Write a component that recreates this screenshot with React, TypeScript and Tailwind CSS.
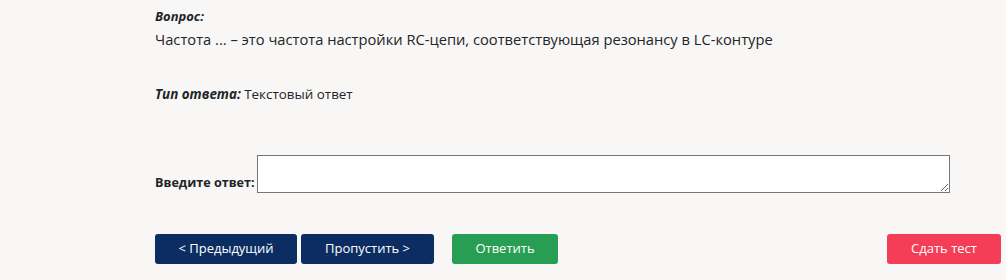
import React, { useState } from 'react';

const App: React.FC = () => {
    const [answer, setAnswer] = useState('');

    return (
        <div className="min-h-[280px] w-full bg-[#f8f7f5] text-[#212529]" style={{ fontFamily: '"Open Sans", "Noto Sans", sans-serif' }}>
            <div className="pl-[155px] pr-[5px] pt-[7px]">
                <div className="text-[13px] font-bold italic leading-[18px]">Вопрос:</div>
                <div className="text-[14.7px] leading-[24px] mt-[2px]">
                    Частота ... – это частота настройки RC-цепи, соответствующая резонансу в LC-контуре
                </div>

                <div className="mt-[33px] text-[13.4px] leading-[20px]">
                    <span className="font-bold italic">Тип ответа:</span> Текстовый ответ
                </div>

                <div className="mt-[51px] flex items-end">
                    <label className="text-[12.6px] font-bold leading-[18px] mb-[1px] mr-[2px]">Введите ответ:</label>
                    <textarea
                        value={answer}
                        onChange={(e) => setAnswer(e.target.value)}
                        className="w-[693px] h-[38px] bg-white border border-[#767676] rounded-none outline-none px-1 text-[14px]"
                    />
                </div>

                <div className="mt-[41px] flex items-center">
                    <button className="w-[142px] h-[30px] rounded-[3px] bg-[#0b2d62] text-white text-[13px]">&lt; Предыдущий</button>
                    <button className="ml-[4px] w-[133px] h-[30px] rounded-[3px] bg-[#0b2d62] text-white text-[13px]">Пропустить &gt;</button>
                    <button className="ml-[18px] w-[106px] h-[30px] rounded-[3px] bg-[#289e54] text-white text-[13px]">Ответить</button>
                    <button className="ml-auto w-[114px] h-[30px] rounded-[3px] bg-[#f43d56] text-white text-[13px]">Сдать тест</button>
                </div>
            </div>
        </div>
    );
};

export default App;
